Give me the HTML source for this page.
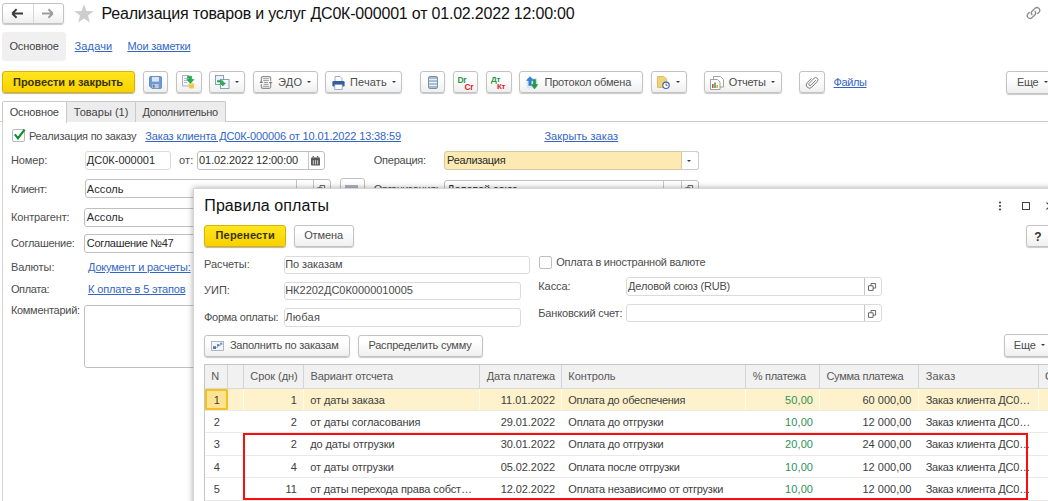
<!DOCTYPE html>
<html lang="ru">
<head>
<meta charset="utf-8">
<title>Реализация товаров и услуг ДС0К-000001</title>
<style>
*{box-sizing:border-box;margin:0;padding:0}
html,body{width:1048px;height:501px;overflow:hidden;background:#fff}
body{font-family:"Liberation Sans",sans-serif;font-size:11px;color:#3f3f3f;position:relative}
.a{position:absolute}
.t{position:absolute;white-space:pre}
.lnk{text-decoration:underline;text-underline-offset:1px;text-decoration-thickness:1px}
.btn{border:1px solid #c3c3c3;border-radius:3px;background:linear-gradient(#ffffff 30%,#efefef);box-shadow:0 1px 1px rgba(0,0,0,.22)}
.ybtn{border:1px solid #d9b300;border-radius:3px;background:linear-gradient(#ffe61e,#f8d100);box-shadow:0 1px 1px rgba(0,0,0,.3)}
.inp{border:1px solid #bfbfbf;border-radius:3px;background:#fff}
.inpl{border:1px solid #dbdbdb;border-radius:3px;background:#fff}
.dd{position:absolute;width:0;height:0;border-left:2.5px solid transparent;border-right:2.5px solid transparent;border-top:2.5px solid #3a3a3a}
.vl{position:absolute;width:1px;background:#c6c6c6}
svg{position:absolute;overflow:visible}
</style>
</head>
<body>
<div class="a btn" style="left:2px;top:3px;width:62px;height:21px;"><div class="vl" style="left:30px;top:0;height:19px;background:#d8d8d8"></div></div>
<svg style="left:11px;top:8px" width="13" height="11" viewBox="0 0 13 11"><path d="M1.2 5.5H12M1.2 5.5L5.6 1.3M1.2 5.5L5.6 9.7" stroke="#3a3a3a" stroke-width="1.9" fill="none"/></svg>
<svg style="left:41px;top:8px" width="13" height="11" viewBox="0 0 13 11"><path d="M1 5.5H11.8M11.8 5.5L7.4 1.3M11.8 5.5L7.4 9.7" stroke="#9d9d9d" stroke-width="1.9" fill="none"/></svg>
<svg style="left:73.5px;top:4px" width="20" height="19" viewBox="0 0 20 19"><path d="M10 0.3L12.5 6.9L19.6 7.2L14 11.6L15.9 18.5L10 14.6L4.1 18.5L6 11.6L0.4 7.2L7.5 6.9Z" fill="#cdcdcd"/></svg>
<div class="t " style="left:101.5px;top:4px;font-size:16px;line-height:20px;height:20px;letter-spacing:-0.2px;color:#111;">Реализация товаров и услуг ДС0К-000001 от 01.02.2022 12:00:00</div>
<svg style="left:1024.500px;top:4.500px" width="17" height="16" viewBox="0 0 15 14"><g fill="none" stroke="#8c8c8c" stroke-width="1.15" stroke-linecap="round"><path d="M6.2 8.6a2.5 2.5 0 0 1 .2-3.4l2.6-2.5a2.5 2.5 0 0 1 3.5 3.5l-1.3 1.3"/><path d="M8.8 5.4a2.5 2.5 0 0 1-.2 3.4l-2.6 2.5a2.5 2.5 0 0 1-3.5-3.5l1.3-1.3"/></g></svg>
<div class="a " style="left:2px;top:32px;width:64px;height:28.5px;background:#f0f0f0;border-radius:3px"></div>
<div class="t " style="left:9.4px;top:39px;font-size:11px;line-height:14px;height:14px;letter-spacing:-0.12px;color:#444;">Основное</div>
<div class="t lnk" style="left:74.6px;top:39px;font-size:11px;line-height:14px;height:14px;letter-spacing:0.13px;color:#3366c4;">Задачи</div>
<div class="t lnk" style="left:127.4px;top:39px;font-size:11px;line-height:14px;height:14px;letter-spacing:-0.19px;color:#3366c4;">Мои заметки</div>
<div class="a ybtn" style="left:2px;top:71px;width:133px;height:22px;"></div>
<div class="t " style="left:13.0px;top:75px;font-size:11px;line-height:14px;height:14px;letter-spacing:-0.01px;color:#3b3200;font-weight:bold;">Провести и закрыть</div>
<div class="a btn" style="left:143px;top:71px;width:25px;height:22px;"></div>
<div class="a btn" style="left:176px;top:71px;width:25.5px;height:22px;"></div>
<div class="a btn" style="left:209px;top:71px;width:36px;height:22px;"></div>
<div class="dd" style="left:234.5px;top:81.0px"></div>
<div class="a btn" style="left:252.5px;top:71px;width:65.0px;height:22px;"></div>
<div class="t " style="left:277.9px;top:75px;font-size:11px;line-height:14px;height:14px;letter-spacing:0.28px;color:#4d4d4d;">ЭДО</div>
<div class="dd" style="left:307.0px;top:81.0px"></div>
<div class="a btn" style="left:325px;top:71px;width:77px;height:22px;"></div>
<div class="t " style="left:350.0px;top:75px;font-size:11px;line-height:14px;height:14px;letter-spacing:0.15px;color:#4d4d4d;">Печать</div>
<div class="dd" style="left:392.0px;top:81.0px"></div>
<div class="a btn" style="left:419.5px;top:71px;width:25.0px;height:22px;"></div>
<div class="a btn" style="left:452.5px;top:71px;width:25.5px;height:22px;"></div>
<div class="a btn" style="left:486px;top:71px;width:25.5px;height:22px;"></div>
<div class="a btn" style="left:519px;top:71px;width:123.5px;height:22px;"></div>
<div class="t " style="left:544.4px;top:75px;font-size:11px;line-height:14px;height:14px;letter-spacing:-0.17px;color:#4d4d4d;">Протокол обмена</div>
<div class="a btn" style="left:650.5px;top:71px;width:36.0px;height:22px;"></div>
<div class="dd" style="left:675.5px;top:81.0px"></div>
<div class="a btn" style="left:703.5px;top:71px;width:78.5px;height:22px;"></div>
<div class="t " style="left:728.8px;top:75px;font-size:11px;line-height:14px;height:14px;letter-spacing:-0.19px;color:#4d4d4d;">Отчеты</div>
<div class="dd" style="left:771.0px;top:81.0px"></div>
<div class="a btn" style="left:799px;top:71px;width:25.5px;height:22px;"></div>
<div class="t lnk" style="left:833.6px;top:75px;font-size:11px;line-height:14px;height:14px;letter-spacing:-0.41px;color:#3366c4;">Файлы</div>
<div class="a btn" style="left:1005.5px;top:70.5px;width:64.5px;height:23.0px;"></div>
<div class="t " style="left:1017.0px;top:75px;font-size:11px;line-height:14px;height:14px;letter-spacing:-0.4px;color:#4d4d4d;">Еще</div>
<div class="dd" style="left:1043.5px;top:81.0px"></div>
<svg style="left:149px;top:76px" width="13" height="13" viewBox="0 0 13 13"><path d="M1.5 0.5h10a1 1 0 0 1 1 1v10a1 1 0 0 1-1 1h-8.5l-2.5-2.5v-8.500a1 1 0 0 1 1-1z" fill="#6c9ad8" stroke="#4f7fc0" stroke-width=".8"/><rect x="3" y="1" width="7" height="4.6" fill="#dbe7f6"/><rect x="3.3" y="8" width="6.4" height="4.2" fill="#c9c9c9"/><rect x="4" y="8.8" width="1.6" height="2.8" fill="#4a78b8"/></svg>
<svg style="left:182px;top:75px" width="14" height="14" viewBox="0 0 14 14"><path d="M.5 .5h6l2 2v8.500h-8z" fill="#f4f6fa" stroke="#8fa3bf" stroke-width=".8"/><path d="M2 3.500h4M2 5.500h4M2 7.500h3" stroke="#9fb0c8" stroke-width=".8"/><path d="M5.500 1.200h4.200v3.300h2.300l-3.600 3.800-3.600-3.800h2.300v-1.300h-1.600z" fill="#21b24f" stroke="#178a3b" stroke-width=".5"/><path d="M7 9.500v3c0 1.300 5 1.300 5 0v-3z" fill="#f1c93b"/><ellipse cx="9.500" cy="9.500" rx="2.500" ry="1.100" fill="#fbe27a" stroke="#d9ac1f" stroke-width=".5"/></svg>
<svg style="left:215px;top:75px" width="15" height="14" viewBox="0 0 15 14"><rect x=".5" y=".5" width="8" height="9" fill="#eef2f8" stroke="#8096b8" stroke-width=".9"/><rect x="5.500" y="4.500" width="8.500" height="9" fill="#f6f8fb" stroke="#8096b8" stroke-width=".9"/><path d="M2.500 3.600h3.200c2 0 3 1 3 2.600h1.800l-2.700 3-2.700-3h1.700c0-.6-.4-.9-1.100-.9h-3.200z" fill="#27b552" stroke="#178a3b" stroke-width=".5" transform="translate(0,1.800)"/></svg>
<svg style="left:258.500px;top:76px" width="14" height="13" viewBox="0 0 14 13"><g fill="none" stroke="#8f8f8f"><path d="M2.300 5.200v-3a1.600 1.600 0 0 1 1.600-1.600h6.200a1.600 1.600 0 0 1 1.600 1.600v3M11.700 8v2.800a1.600 1.600 0 0 1-1.600 1.600h-6.200a1.600 1.600 0 0 1-1.600-1.600v-2.800" stroke-width="1.150"/><path d="M3.800 2.700h6.400M4.200 4.600h5.600M5 6.500h4M4.600 8.400h4.800M3.800 10.300h6.400" stroke-width=".9"/></g><path d="M.3 6.900l2-2.300 2 2.300zM9.700 6l2 2.300 2-2.300z" fill="#7d7d7d"/></svg>
<svg style="left:331.500px;top:75.500px" width="13" height="14" viewBox="0 0 13 14"><path d="M3 .5h5l2 2v3h-7z" fill="#fff" stroke="#8b9bb3" stroke-width=".8"/><rect x=".4" y="5" width="12.200" height="5.600" rx="1.300" fill="#2f5f9e"/><rect x="2.800" y="8.600" width="7.400" height="4.800" fill="#fff" stroke="#8b9bb3" stroke-width=".8"/></svg>
<svg style="left:428px;top:76px" width="10" height="13" viewBox="0 0 10 13"><rect x=".5" y=".5" width="9" height="12" rx="1.500" fill="#a8bbcf" stroke="#7690ab" stroke-width="1"/><path d="M1 3.600h8M1 6.500h8M1 9.400h8" stroke="#eef4fa" stroke-width="1"/></svg>
<div class="t" style="left:457.500px;top:75.500px;font-size:8.500px;line-height:8px;font-weight:bold;color:#1f9b45;letter-spacing:-.3px">Dr</div>
<div class="t" style="left:464.500px;top:82.500px;font-size:8.500px;line-height:8px;font-weight:bold;color:#e0212d;letter-spacing:-.3px">Cr</div>
<div class="t" style="left:491px;top:75.500px;font-size:8px;line-height:8px;font-weight:bold;color:#1f9b45;letter-spacing:-.3px">Дт</div>
<div class="t" style="left:497px;top:82.500px;font-size:8px;line-height:8px;font-weight:bold;color:#e0212d;letter-spacing:-.3px">Кт</div>
<svg style="left:525px;top:75.500px" width="14" height="14" viewBox="0 0 14 14"><rect x="1.500" y="2" width="11" height="10.500" rx="2" fill="#dfe5ee"/><path d="M3.800 9.500v-5h-2.300l3.500-4 3.500 4h-2.300v5z" fill="#2b86e0" stroke="#1b62b5" stroke-width=".4"/><path d="M8.300 3.500v5h-2.100l3.300 4.500 3.300-4.500h-2.100v-5z" fill="#19a044" stroke="#0f7a30" stroke-width=".4"/></svg>
<svg style="left:657px;top:76px" width="13" height="13" viewBox="0 0 13 13"><path d="M.5 .5h6.500l2.500 2.500v8.500h-9z" fill="#f2d277" stroke="#d9b44a" stroke-width=".8"/><circle cx="9" cy="9.300" r="3.200" fill="#fff" stroke="#2f62b5" stroke-width="1.100"/><path d="M9 7.500v1.900h1.500" stroke="#d23b3b" stroke-width=".9" fill="none"/></svg>
<svg style="left:709.500px;top:75.500px" width="14" height="14" viewBox="0 0 14 14"><path d="M3.500 .5h7l3 3v7.500h-10z" fill="#fff" stroke="#8a8a8a" stroke-width=".8"/><path d="M.5 3.500h7l2.500 2.500v7.500h-9.500z" fill="#fff" stroke="#8a8a8a" stroke-width=".8"/><rect x="2" y="8" width="1.600" height="4" fill="#d94a3a"/><rect x="4.200" y="6.500" width="1.600" height="5.500" fill="#3aa655"/><rect x="6.400" y="9" width="1.600" height="3" fill="#e2a93a"/></svg>
<svg style="left:805.500px;top:75.500px" width="12" height="13" viewBox="0 0 12 13"><path d="M9.800 4.200L5 9.200a1.300 1.300 0 0 1-1.900-1.800l5-5.200a2.300 2.300 0 0 1 3.300 3.200l-5.600 5.800a3.200 3.200 0 0 1-4.600-4.500l4.300-4.400" fill="none" stroke="#7d7d7d" stroke-width="1"/></svg>
<div class="a " style="left:0px;top:121px;width:1048px;height:1px;background:#cdcdcd"></div>
<div class="a " style="left:66px;top:101px;width:70px;height:21px;background:#ececec;border:1px solid #c9c9c9;border-bottom:none;border-radius:2px 2px 0 0"></div>
<div class="a " style="left:135px;top:101px;width:91px;height:21px;background:#ececec;border:1px solid #c9c9c9;border-bottom:none;border-radius:2px 2px 0 0"></div>
<div class="a " style="left:2px;top:101px;width:65px;height:22px;background:#fff;border:1px solid #c9c9c9;border-bottom:none;border-radius:2px 2px 0 0"></div>
<div class="a " style="left:2px;top:122px;width:1px;height:379px;background:#d4d4d4"></div>
<div class="t " style="left:9.7px;top:105px;font-size:11px;line-height:14px;height:14px;letter-spacing:-0.16px;color:#444;">Основное</div>
<div class="t " style="left:73.8px;top:105px;font-size:11px;line-height:14px;height:14px;letter-spacing:0.03px;color:#444;">Товары (1)</div>
<div class="t " style="left:142.4px;top:105px;font-size:11px;line-height:14px;height:14px;letter-spacing:-0.29px;color:#444;">Дополнительно</div>
<div class="a " style="left:12px;top:129px;width:13px;height:13px;border:1px solid #b9b9b9;border-radius:2px;background:#fff"></div>
<svg style="left:13px;top:128px" width="13" height="13" viewBox="0 0 13 13"><path d="M1.800 6.300L5 10.200L11.600 1.600" stroke="#0d8c30" stroke-width="2.100" fill="none"/></svg>
<div class="t " style="left:29.0px;top:129px;font-size:11px;line-height:14px;height:14px;letter-spacing:-0.24px;color:#4d4d4d;">Реализация по заказу</div>
<div class="t lnk" style="left:145.3px;top:129px;font-size:11px;line-height:14px;height:14px;letter-spacing:-0.13px;color:#3366c4;">Заказ клиента ДС0К-000006 от 10.01.2022 13:38:59</div>
<div class="t lnk" style="left:544.4px;top:129px;font-size:11px;line-height:14px;height:14px;letter-spacing:0.08px;color:#3366c4;">Закрыть заказ</div>
<div class="t " style="left:10.9px;top:153px;font-size:11px;line-height:14px;height:14px;letter-spacing:-0.1px;color:#4d4d4d;">Номер:</div>
<div class="a inpl" style="left:84.5px;top:150.5px;width:86.0px;height:19.0px;"></div>
<div class="t " style="left:86.8px;top:153px;font-size:11px;line-height:14px;height:14px;letter-spacing:0.0px;color:#2b2b2b;">ДС0К-000001</div>
<div class="t " style="left:179.0px;top:153px;font-size:11px;line-height:14px;height:14px;letter-spacing:0.21px;color:#4d4d4d;">от:</div>
<div class="a inp" style="left:197px;top:150.5px;width:127.5px;height:19.0px;"><div class="vl" style="left:110px;top:0;height:17px"></div></div>
<div class="t " style="left:199.1px;top:153px;font-size:11px;line-height:14px;height:14px;letter-spacing:-0.1px;color:#2b2b2b;">01.02.2022 12:00:00</div>
<svg style="left:311.300px;top:156px" width="9" height="9.500" viewBox="0 0 9 9.500"><rect x="0" y="1.600" width="9" height="7.900" rx=".8" fill="#5a5a5a"/><path d="M2.300 .9v1.800M6.700 .9v1.800" stroke="#5a5a5a" stroke-width="1.700" stroke-linecap="round"/><path d="M2.350 4.200v4.200M4.500 4.200v4.200M6.650 4.200v4.200" stroke="#e8e8e8" stroke-width=".85"/><path d="M2.300 1.300v.9M6.700 1.300v.9" stroke="#eee" stroke-width=".6"/></svg>
<div class="t " style="left:373.8px;top:153px;font-size:11px;line-height:14px;height:14px;letter-spacing:-0.25px;color:#4d4d4d;">Операция:</div>
<div class="a inp" style="left:444px;top:151px;width:254.5px;height:18.5px;background:#fdeab3;border-color:#d3c9a6"><div class="a" style="left:235.500px;top:-1px;width:18px;height:18.500px;background:#fff;border:1px solid #cdcdcd;border-left:1px solid #d3c9a6;border-radius:0 3px 3px 0"></div></div>
<div class="t " style="left:447.1px;top:153px;font-size:11px;line-height:14px;height:14px;letter-spacing:-0.3px;color:#2b2b2b;">Реализация</div>
<div class="dd" style="left:686.5px;top:159.5px"></div>
<div class="t " style="left:10.9px;top:182px;font-size:11px;line-height:14px;height:14px;letter-spacing:-0.48px;color:#4d4d4d;">Клиент:</div>
<div class="a inp" style="left:84.5px;top:179px;width:246.0px;height:19px;"><div class="vl" style="left:210px;top:0;height:17px"></div><div class="vl" style="left:227.500px;top:0;height:17px"></div></div>
<div class="t " style="left:86.8px;top:182px;font-size:11px;line-height:14px;height:14px;letter-spacing:0.04px;color:#2b2b2b;">Ассоль</div>
<svg style="left:317px;top:185px" width="8" height="8" viewBox="0 0 8 8"><path d="M3 .5h4.600v4.600h-4.600z" fill="#fff" stroke="#5a5a5a" stroke-width=".9"/><path d="M.5 2.800h4.600v4.600h-4.600z" fill="#fff" stroke="#5a5a5a" stroke-width=".9"/></svg>
<div class="a btn" style="left:339.5px;top:178px;width:25.0px;height:22px;"></div>
<div class="a " style="left:345px;top:185px;width:13px;height:10px;background:#adb9c6"></div>
<div class="t " style="left:373.8px;top:182px;font-size:11px;line-height:14px;height:14px;letter-spacing:-0.42px;color:#4d4d4d;">Организация:</div>
<div class="a inp" style="left:444px;top:179.5px;width:254.5px;height:18.5px;"><div class="vl" style="left:217.500px;top:0;height:17px"></div><div class="vl" style="left:235.500px;top:0;height:17px"></div></div>
<div class="t " style="left:447.1px;top:182px;font-size:11px;line-height:14px;height:14px;letter-spacing:-0.13px;color:#2b2b2b;">Деловой союз</div>
<svg style="left:685.2px;top:185.3px" width="8" height="8" viewBox="0 0 8 8"><path d="M3 .5h4.600v4.600h-4.600z" fill="#fff" stroke="#5a5a5a" stroke-width=".9"/><path d="M.5 2.800h4.600v4.600h-4.600z" fill="#fff" stroke="#5a5a5a" stroke-width=".9"/></svg>
<div class="t " style="left:10.9px;top:210px;font-size:11px;line-height:14px;height:14px;letter-spacing:-0.12px;color:#4d4d4d;">Контрагент:</div>
<div class="a inp" style="left:84px;top:207.5px;width:246px;height:19.0px;"></div>
<div class="t " style="left:86.8px;top:210px;font-size:11px;line-height:14px;height:14px;letter-spacing:0.04px;color:#2b2b2b;">Ассоль</div>
<div class="t " style="left:10.9px;top:236px;font-size:11px;line-height:14px;height:14px;letter-spacing:-0.27px;color:#4d4d4d;">Соглашение:</div>
<div class="a inp" style="left:84px;top:234px;width:246px;height:19px;"></div>
<div class="t " style="left:86.8px;top:236px;font-size:11px;line-height:14px;height:14px;letter-spacing:-0.3px;color:#2b2b2b;">Соглашение №47</div>
<div class="t " style="left:10.9px;top:260px;font-size:11px;line-height:14px;height:14px;letter-spacing:-0.05px;color:#4d4d4d;">Валюты:</div>
<div class="t lnk" style="left:88.0px;top:260px;font-size:11px;line-height:14px;height:14px;letter-spacing:-0.19px;color:#3366c4;">Документ и расчеты:</div>
<div class="t " style="left:10.9px;top:282px;font-size:11px;line-height:14px;height:14px;letter-spacing:-0.37px;color:#4d4d4d;">Оплата:</div>
<div class="t lnk" style="left:88.0px;top:282px;font-size:11px;line-height:14px;height:14px;letter-spacing:-0.15px;color:#3366c4;">К оплате в 5 этапов</div>
<div class="t " style="left:10.9px;top:303px;font-size:11px;line-height:14px;height:14px;letter-spacing:-0.29px;color:#4d4d4d;">Комментарий:</div>
<div class="a inp" style="left:84px;top:304.5px;width:246px;height:63.0px;"></div>
<div class="a " style="left:193px;top:188px;width:867px;height:332px;background:#fff;border:1px solid #d6d6d6;box-shadow:0 0 6px rgba(0,0,0,.34)"></div>
<div class="t " style="left:204.3px;top:196px;font-size:16px;line-height:20px;height:20px;letter-spacing:0.08px;color:#111;">Правила оплаты</div>
<svg style="left:998px;top:201px" width="4" height="10" viewBox="0 0 4 10"><circle cx="2" cy="1.500" r="1.100" fill="#444"/><circle cx="2" cy="5" r="1.100" fill="#444"/><circle cx="2" cy="8.500" r="1.100" fill="#444"/></svg>
<div class="a " style="left:1022px;top:202px;width:8px;height:8px;border:1px solid #444"></div>
<svg style="left:1046px;top:202px" width="9" height="8" viewBox="0 0 9 8"><path d="M.5 .5L8 7.500M8 .5L.5 7.500" stroke="#444" stroke-width="1.100"/></svg>
<div class="a ybtn" style="left:204px;top:225px;width:81.5px;height:21.5px;"></div>
<div class="t " style="left:215.5px;top:228px;font-size:11px;line-height:14px;height:14px;letter-spacing:0.18px;color:#3b3200;font-weight:bold;">Перенести</div>
<div class="a btn" style="left:293.5px;top:225px;width:60.5px;height:21.5px;"></div>
<div class="t " style="left:304.2px;top:228px;font-size:11px;line-height:14px;height:14px;letter-spacing:-0.13px;color:#4d4d4d;">Отмена</div>
<div class="a btn" style="left:1026px;top:225px;width:34px;height:22px;"></div>
<div class="t " style="left:1034.3px;top:230px;font-size:12px;line-height:15px;height:15px;letter-spacing:0px;color:#333;font-weight:bold;">?</div>
<div class="t " style="left:204.0px;top:257px;font-size:11px;line-height:14px;height:14px;letter-spacing:-0.02px;color:#4d4d4d;">Расчеты:</div>
<div class="a inpl" style="left:283.5px;top:255.5px;width:246.0px;height:18.0px;"></div>
<div class="t " style="left:285.2px;top:257px;font-size:11px;line-height:14px;height:14px;letter-spacing:-0.08px;color:#4a4a4a;">По заказам</div>
<div class="t " style="left:204.0px;top:283px;font-size:11px;line-height:14px;height:14px;letter-spacing:0.01px;color:#4d4d4d;">УИП:</div>
<div class="a inpl" style="left:283.5px;top:281.5px;width:237.0px;height:18.5px;"></div>
<div class="t " style="left:285.2px;top:283px;font-size:11px;line-height:14px;height:14px;letter-spacing:-0.01px;color:#4a4a4a;">НК2202ДС0К0000010005</div>
<div class="t " style="left:204.0px;top:310px;font-size:11px;line-height:14px;height:14px;letter-spacing:-0.26px;color:#4d4d4d;">Форма оплаты:</div>
<div class="a inpl" style="left:283.5px;top:308px;width:237.0px;height:18.5px;"></div>
<div class="t " style="left:285.2px;top:310px;font-size:11px;line-height:14px;height:14px;letter-spacing:0.3px;color:#4a4a4a;">Любая</div>
<div class="a " style="left:539px;top:256px;width:13px;height:13px;border:1px solid #bfbfbf;border-radius:2px;background:#fff"></div>
<div class="t " style="left:556.2px;top:255px;font-size:11px;line-height:14px;height:14px;letter-spacing:-0.24px;color:#4d4d4d;">Оплата в иностранной валюте</div>
<div class="t " style="left:538.3px;top:279px;font-size:11px;line-height:14px;height:14px;letter-spacing:-0.08px;color:#4d4d4d;">Касса:</div>
<div class="a inpl" style="left:626px;top:277px;width:255.5px;height:18.5px;"><div class="vl" style="left:236.500px;top:0;height:16.500px"></div></div>
<div class="t " style="left:628.1px;top:279px;font-size:11px;line-height:14px;height:14px;letter-spacing:-0.2px;color:#4a4a4a;">Деловой союз (RUB)</div>
<div class="t " style="left:538.3px;top:306px;font-size:11px;line-height:14px;height:14px;letter-spacing:-0.17px;color:#4d4d4d;">Банковский счет:</div>
<div class="a inpl" style="left:626px;top:303.5px;width:255.5px;height:18.5px;"><div class="vl" style="left:236.500px;top:0;height:16.500px"></div></div>
<svg style="left:868px;top:283px" width="8" height="8" viewBox="0 0 8 8"><path d="M3 .5h4.600v4.600h-4.600z" fill="#fff" stroke="#5a5a5a" stroke-width=".9"/><path d="M.5 2.800h4.600v4.600h-4.600z" fill="#fff" stroke="#5a5a5a" stroke-width=".9"/></svg>
<svg style="left:868px;top:309.5px" width="8" height="8" viewBox="0 0 8 8"><path d="M3 .5h4.600v4.600h-4.600z" fill="#fff" stroke="#5a5a5a" stroke-width=".9"/><path d="M.5 2.800h4.600v4.600h-4.600z" fill="#fff" stroke="#5a5a5a" stroke-width=".9"/></svg>
<div class="a btn" style="left:204px;top:334.5px;width:146px;height:22.0px;"></div>
<div class="t " style="left:229.9px;top:338px;font-size:11px;line-height:14px;height:14px;letter-spacing:-0.22px;color:#4d4d4d;">Заполнить по заказам</div>
<svg style="left:211px;top:341px" width="13" height="10" viewBox="0 0 13 10"><rect x=".5" y=".5" width="12" height="9" fill="#f3f5f8" stroke="#9aa7b8" stroke-width=".8"/><rect x="2" y="5.200" width="3" height="2.800" fill="#4f79b5"/><rect x="6" y="3.200" width="2.400" height="2" fill="#4f79b5"/><rect x="9" y="1.600" width="2.400" height="2" fill="#7f9cc7"/><path d="M5 6.500h1.500v-2.300M8.400 4.200h1.500v-1" stroke="#7d8ea8" stroke-width=".6" fill="none"/></svg>
<div class="a btn" style="left:358px;top:334.5px;width:124.5px;height:22.0px;"></div>
<div class="t " style="left:368.4px;top:338px;font-size:11px;line-height:14px;height:14px;letter-spacing:-0.2px;color:#4d4d4d;">Распределить сумму</div>
<div class="a btn" style="left:1003.5px;top:334px;width:66.5px;height:22.5px;"></div>
<div class="t " style="left:1013.7px;top:338px;font-size:11px;line-height:14px;height:14px;letter-spacing:-0.05px;color:#4d4d4d;">Еще</div>
<div class="dd" style="left:1040.5px;top:344.0px"></div>
<div class="a " style="left:204px;top:364px;width:856px;height:156px;border:1px solid #c6c6c6;border-right:none;background:#fff"></div>
<div class="a " style="left:205px;top:365px;width:855px;height:24px;background:#f1f1f1;border-bottom:1px solid #d9d9d9"></div>
<div class="a " style="left:205px;top:389px;width:855px;height:20.9px;background:#fdf2cb"></div>
<div class="a " style="left:205px;top:409.9px;width:855px;height:1.0px;background:#e9e9e9"></div>
<div class="a " style="left:205px;top:432.3px;width:855px;height:1.0px;background:#e9e9e9"></div>
<div class="a " style="left:205px;top:454.7px;width:855px;height:1.0px;background:#e9e9e9"></div>
<div class="a " style="left:205px;top:477.1px;width:855px;height:1.0px;background:#e9e9e9"></div>
<div class="a " style="left:205px;top:499.5px;width:855px;height:1.0px;background:#e9e9e9"></div>
<div class="a " style="left:226.7px;top:365px;width:1.0px;height:24px;background:#d4d4d4"></div>
<div class="a " style="left:226.7px;top:389px;width:1.0px;height:20.9px;background:#fffbec"></div>
<div class="a " style="left:242.7px;top:365px;width:1.0px;height:24px;background:#d4d4d4"></div>
<div class="a " style="left:242.7px;top:389px;width:1.0px;height:20.9px;background:#fffbec"></div>
<div class="a " style="left:302.7px;top:365px;width:1.0px;height:24px;background:#d4d4d4"></div>
<div class="a " style="left:302.7px;top:389px;width:1.0px;height:20.9px;background:#fffbec"></div>
<div class="a " style="left:478.9px;top:365px;width:1.0px;height:24px;background:#d4d4d4"></div>
<div class="a " style="left:478.9px;top:389px;width:1.0px;height:20.9px;background:#fffbec"></div>
<div class="a " style="left:561.0px;top:365px;width:1.0px;height:24px;background:#d4d4d4"></div>
<div class="a " style="left:561.0px;top:389px;width:1.0px;height:20.9px;background:#fffbec"></div>
<div class="a " style="left:744.9px;top:365px;width:1.0px;height:24px;background:#d4d4d4"></div>
<div class="a " style="left:744.9px;top:389px;width:1.0px;height:20.9px;background:#fffbec"></div>
<div class="a " style="left:818.9px;top:365px;width:1.0px;height:24px;background:#d4d4d4"></div>
<div class="a " style="left:818.9px;top:389px;width:1.0px;height:20.9px;background:#fffbec"></div>
<div class="a " style="left:917.7px;top:365px;width:1.0px;height:24px;background:#d4d4d4"></div>
<div class="a " style="left:917.7px;top:389px;width:1.0px;height:20.9px;background:#fffbec"></div>
<div class="a " style="left:1038.3px;top:365px;width:1.0px;height:24px;background:#d4d4d4"></div>
<div class="a " style="left:1038.3px;top:389px;width:1.0px;height:20.9px;background:#fffbec"></div>
<div class="a " style="left:205px;top:389px;width:22.5px;height:20.7px;background:#fbe391;border:2px solid #f5c021;border-radius:1px"></div>
<div class="t " style="left:211.2px;top:369px;font-size:11px;line-height:14px;height:14px;letter-spacing:-0.22px;color:#585858;">N</div>
<div class="t " style="left:250.3px;top:369px;font-size:11px;line-height:14px;height:14px;letter-spacing:-0.06px;color:#585858;">Срок (дн)</div>
<div class="t " style="left:310.6px;top:369px;font-size:11px;line-height:14px;height:14px;letter-spacing:-0.16px;color:#585858;">Вариант отсчета</div>
<div class="t " style="left:486.7px;top:369px;font-size:11px;line-height:14px;height:14px;letter-spacing:-0.15px;color:#585858;">Дата платежа</div>
<div class="t " style="left:568.3px;top:369px;font-size:11px;line-height:14px;height:14px;letter-spacing:-0.07px;color:#585858;">Контроль</div>
<div class="t " style="left:752.7px;top:369px;font-size:11px;line-height:14px;height:14px;letter-spacing:-0.27px;color:#585858;">% платежа</div>
<div class="t " style="left:826.4px;top:369px;font-size:11px;line-height:14px;height:14px;letter-spacing:-0.26px;color:#585858;">Сумма платежа</div>
<div class="t " style="left:925.7px;top:369px;font-size:11px;line-height:14px;height:14px;letter-spacing:0.16px;color:#585858;">Заказ</div>
<div class="t " style="left:1044.9px;top:369px;font-size:11px;line-height:14px;height:14px;letter-spacing:-0.22px;color:#585858;">Сумма</div>
<div class="t " style="left:213.7px;top:393px;font-size:11px;line-height:14px;height:14px;letter-spacing:0px;color:#404040;">1</div>
<div class="t " style="left:290.8px;top:393px;font-size:11px;line-height:14px;height:14px;letter-spacing:0px;color:#404040;">1</div>
<div class="t " style="left:310.2px;top:393px;font-size:11px;line-height:14px;height:14px;letter-spacing:-0.08px;color:#404040;">от даты заказа</div>
<div class="t " style="left:500.7px;top:393px;font-size:11px;line-height:14px;height:14px;letter-spacing:0.02px;color:#404040;">11.01.2022</div>
<div class="t " style="left:568.3px;top:393px;font-size:11px;line-height:14px;height:14px;letter-spacing:-0.25px;color:#404040;">Оплата до обеспечения</div>
<div class="t " style="left:785.1px;top:393px;font-size:11px;line-height:14px;height:14px;letter-spacing:0.09px;color:#2f9159;">50,00</div>
<div class="t " style="left:862.4px;top:393px;font-size:11px;line-height:14px;height:14px;letter-spacing:0.02px;color:#404040;">60 000,00</div>
<div class="t " style="left:925.7px;top:393px;font-size:11px;line-height:14px;height:14px;letter-spacing:-0.22px;color:#404040;">Заказ клиента ДС0…</div>
<div class="t " style="left:213.7px;top:415px;font-size:11px;line-height:14px;height:14px;letter-spacing:0px;color:#404040;">2</div>
<div class="t " style="left:290.8px;top:415px;font-size:11px;line-height:14px;height:14px;letter-spacing:0px;color:#404040;">2</div>
<div class="t " style="left:310.2px;top:415px;font-size:11px;line-height:14px;height:14px;letter-spacing:-0.09px;color:#404040;">от даты согласования</div>
<div class="t " style="left:500.7px;top:415px;font-size:11px;line-height:14px;height:14px;letter-spacing:-0.07px;color:#404040;">29.01.2022</div>
<div class="t " style="left:568.3px;top:415px;font-size:11px;line-height:14px;height:14px;letter-spacing:-0.21px;color:#404040;">Оплата до отгрузки</div>
<div class="t " style="left:785.1px;top:415px;font-size:11px;line-height:14px;height:14px;letter-spacing:0.09px;color:#2f9159;">10,00</div>
<div class="t " style="left:862.4px;top:415px;font-size:11px;line-height:14px;height:14px;letter-spacing:0.02px;color:#404040;">12 000,00</div>
<div class="t " style="left:925.7px;top:415px;font-size:11px;line-height:14px;height:14px;letter-spacing:-0.22px;color:#404040;">Заказ клиента ДС0…</div>
<div class="t " style="left:213.7px;top:437px;font-size:11px;line-height:14px;height:14px;letter-spacing:0px;color:#404040;">3</div>
<div class="t " style="left:290.8px;top:437px;font-size:11px;line-height:14px;height:14px;letter-spacing:0px;color:#404040;">2</div>
<div class="t " style="left:310.2px;top:437px;font-size:11px;line-height:14px;height:14px;letter-spacing:-0.13px;color:#404040;">до даты отгрузки</div>
<div class="t " style="left:500.7px;top:437px;font-size:11px;line-height:14px;height:14px;letter-spacing:-0.07px;color:#404040;">30.01.2022</div>
<div class="t " style="left:568.3px;top:437px;font-size:11px;line-height:14px;height:14px;letter-spacing:-0.21px;color:#404040;">Оплата до отгрузки</div>
<div class="t " style="left:785.1px;top:437px;font-size:11px;line-height:14px;height:14px;letter-spacing:0.09px;color:#2f9159;">20,00</div>
<div class="t " style="left:862.4px;top:437px;font-size:11px;line-height:14px;height:14px;letter-spacing:0.02px;color:#404040;">24 000,00</div>
<div class="t " style="left:925.7px;top:437px;font-size:11px;line-height:14px;height:14px;letter-spacing:-0.22px;color:#404040;">Заказ клиента ДС0…</div>
<div class="t " style="left:213.7px;top:460px;font-size:11px;line-height:14px;height:14px;letter-spacing:0px;color:#404040;">4</div>
<div class="t " style="left:290.8px;top:460px;font-size:11px;line-height:14px;height:14px;letter-spacing:0px;color:#404040;">4</div>
<div class="t " style="left:310.2px;top:460px;font-size:11px;line-height:14px;height:14px;letter-spacing:-0.07px;color:#404040;">от даты отгрузки</div>
<div class="t " style="left:500.7px;top:460px;font-size:11px;line-height:14px;height:14px;letter-spacing:-0.07px;color:#404040;">05.02.2022</div>
<div class="t " style="left:568.3px;top:460px;font-size:11px;line-height:14px;height:14px;letter-spacing:-0.25px;color:#404040;">Оплата после отгрузки</div>
<div class="t " style="left:785.1px;top:460px;font-size:11px;line-height:14px;height:14px;letter-spacing:0.09px;color:#2f9159;">10,00</div>
<div class="t " style="left:862.4px;top:460px;font-size:11px;line-height:14px;height:14px;letter-spacing:0.02px;color:#404040;">12 000,00</div>
<div class="t " style="left:925.7px;top:460px;font-size:11px;line-height:14px;height:14px;letter-spacing:-0.22px;color:#404040;">Заказ клиента ДС0…</div>
<div class="t " style="left:213.7px;top:482px;font-size:11px;line-height:14px;height:14px;letter-spacing:0px;color:#404040;">5</div>
<div class="t " style="left:285.5px;top:482px;font-size:11px;line-height:14px;height:14px;letter-spacing:0px;color:#404040;">11</div>
<div class="t " style="left:310.2px;top:482px;font-size:11px;line-height:14px;height:14px;letter-spacing:-0.14px;color:#404040;">от даты перехода права собст…</div>
<div class="t " style="left:500.7px;top:482px;font-size:11px;line-height:14px;height:14px;letter-spacing:-0.07px;color:#404040;">12.02.2022</div>
<div class="t " style="left:568.3px;top:482px;font-size:11px;line-height:14px;height:14px;letter-spacing:-0.2px;color:#404040;">Оплата независимо от отгрузки</div>
<div class="t " style="left:785.1px;top:482px;font-size:11px;line-height:14px;height:14px;letter-spacing:0.09px;color:#2f9159;">10,00</div>
<div class="t " style="left:862.4px;top:482px;font-size:11px;line-height:14px;height:14px;letter-spacing:0.02px;color:#404040;">12 000,00</div>
<div class="t " style="left:925.7px;top:482px;font-size:11px;line-height:14px;height:14px;letter-spacing:-0.22px;color:#404040;">Заказ клиента ДС0…</div>
<div class="a " style="left:243px;top:433.3px;width:784.8px;height:67.2px;border:2px solid #fa0d0d"></div>
</body>
</html>
